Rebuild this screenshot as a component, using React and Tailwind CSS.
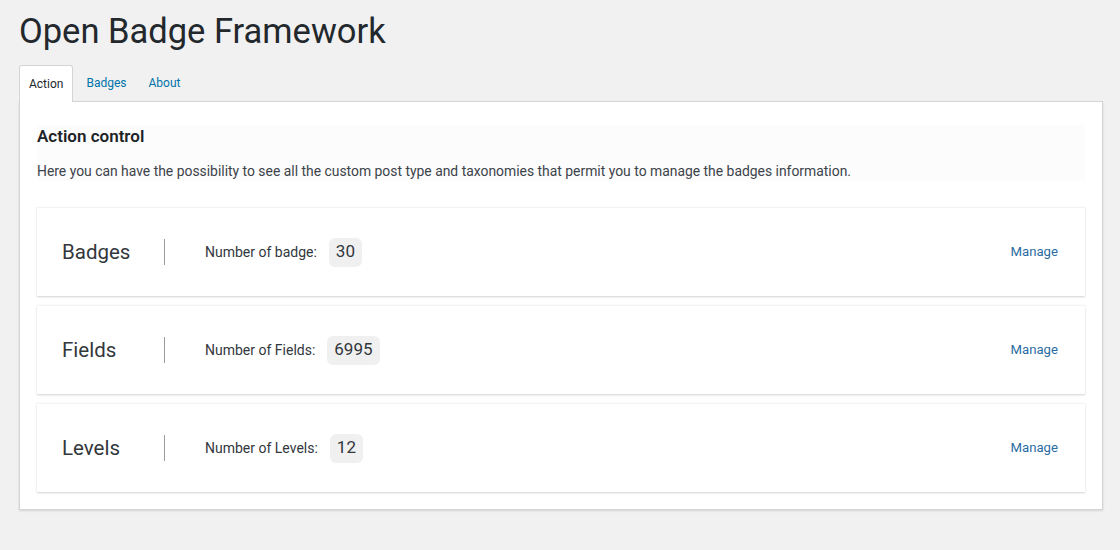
export default function App() {
  const rows = [
    { title: "Badges", label: "Number of badge:", value: "30" },
    { title: "Fields", label: "Number of Fields:", value: "6995" },
    { title: "Levels", label: "Number of Levels:", value: "12" },
  ];
  return (
    <div className="min-h-[550px] bg-[#f1f1f1] pt-[9px] pb-10 text-[#23282d]" style={{ fontFamily: "Roboto, 'Noto Sans', sans-serif" }}>
      <div className="ml-[19px] mr-[17px]">
        <h1 className="text-[34.5px] leading-[44px] font-normal">Open Badge Framework</h1>
        <div className="mt-[12px] flex items-end">
          <div className="relative z-10 -mb-px h-[37px] px-[9px] flex items-center rounded-t-[3px] border border-b-0 border-[#d5d5d5] bg-white text-[12px] text-[#23282d]">Action</div>
          <div className="ml-[4px] h-[36px] px-[9px] flex items-center text-[12px] text-[#0073aa]">Badges</div>
          <div className="ml-[4px] h-[36px] px-[9px] flex items-center text-[12px] text-[#0073aa]">About</div>
        </div>
        <div className="border border-[#d5d5d5] bg-white shadow-[0_1px_2px_rgba(0,0,0,0.12)] px-[17px] pt-[23px] pb-[17px]">
          <div className="bg-[#fcfcfc]">
            <h3 className="text-[17px] leading-[22px] font-semibold text-[#1d2327]">Action control</h3>
            <p className="mt-[14px] text-[13.9px] leading-[20px] text-[#3c434a]">Here you can have the possibility to see all the custom post type and taxonomies that permit you to manage the badges information.</p>
          </div>
          <div className="mt-[26px] flex flex-col gap-[9px]">
            {rows.map((r) => (
              <div key={r.title} className="h-[89px] flex items-center pl-[25px] pr-[27px] bg-white border-t border-[#f3f3f3] shadow-[0_1px_2px_rgba(0,0,0,0.18)]">
                <div className="w-[102px] text-[20.5px] leading-[26px] text-[#32373c]">{r.title}</div>
                <div className="w-px h-[26px] bg-[#9a9a9a]"></div>
                <div className="ml-[40px] text-[14px] text-[#32373c]">{r.label}</div>
                <div className="ml-[12px] h-[29px] px-[7px] flex items-center rounded-[6px] bg-[#f0f0f0] text-[17px] text-[#32373c]">{r.value}</div>
                <div className="ml-auto text-[13.2px] text-[#2b6ca3]">Manage</div>
              </div>
            ))}
          </div>
        </div>
      </div>
    </div>
  );
}
